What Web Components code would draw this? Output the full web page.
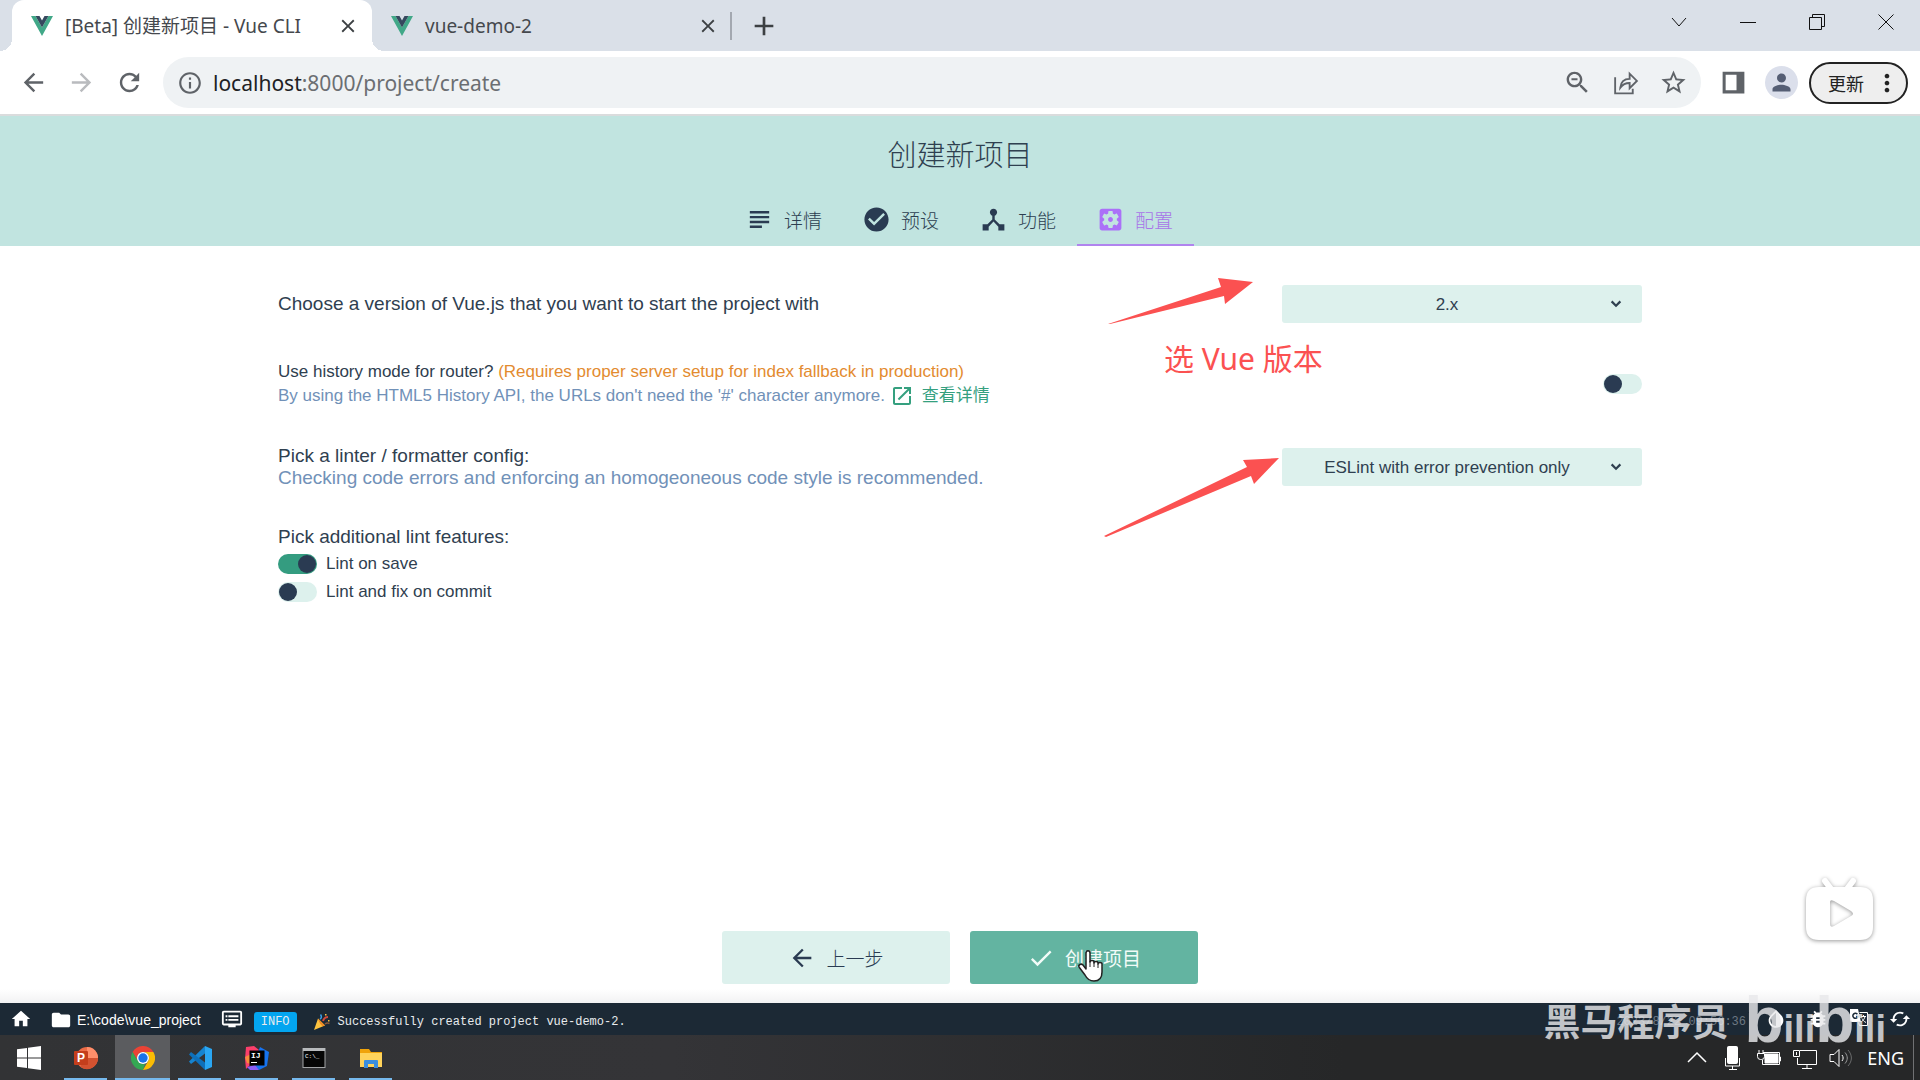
<!DOCTYPE html>
<html lang="zh-CN">
<head>
<meta charset="UTF-8">
<title>[Beta] 创建新项目 - Vue CLI</title>
<style>
    body {
        margin: 0;
        background: #fff;
        font-family: "Liberation Sans", "Noto Sans CJK SC", sans-serif;
        color: #2f4050;
    }
</style>
</head>
<body>
<app-desktop></app-desktop>

<script>
// Filled 24x24 icons, by name
const ICONS = {
    subject: 'M14 17H4v2h10v-2zm6-8H4v2h16V9zM4 15h16v-2H4v2zM4 5v2h16V5H4z',
    check_circle: 'M12 2C6.48 2 2 6.48 2 12s4.48 10 10 10 10-4.48 10-10S17.52 2 12 2zm-2 15l-5-5 1.41-1.41L10 14.17l7.59-7.59L19 8l-9 9z',
    device_hub: 'M17 16l-4-4V8.82C14.16 8.4 15 7.3 15 6c0-1.66-1.34-3-3-3S9 4.34 9 6c0 1.3.84 2.4 2 2.82V12l-4 4H3v5h5v-3.05l4-4.2 4 4.2V21h5v-5h-4z',
    settings_app: 'M12 10c-1.1 0-2 .9-2 2s.9 2 2 2 2-.9 2-2-.9-2-2-2zm7-7H5c-1.11 0-2 .9-2 2v14c0 1.1.89 2 2 2h14c1.11 0 2-.9 2-2V5c0-1.1-.89-2-2-2zm-1.75 9c0 .23-.02.46-.05.68l1.48 1.16c.13.11.17.3.08.45l-1.4 2.42c-.09.15-.27.21-.43.15l-1.74-.7c-.36.28-.76.51-1.18.69l-.26 1.85c-.03.17-.18.3-.35.3h-2.8c-.17 0-.32-.13-.35-.29l-.26-1.85c-.43-.18-.82-.41-1.18-.69l-1.74.7c-.16.06-.34 0-.43-.15l-1.4-2.42c-.09-.15-.05-.34.08-.45l1.48-1.16c-.03-.23-.05-.46-.05-.69s.02-.46.05-.68l-1.48-1.16c-.13-.11-.17-.3-.08-.45l1.4-2.42c.09-.15.27-.21.43-.15l1.74.7c.36-.28.76-.51 1.18-.69l.26-1.85c.03-.17.18-.3.35-.3h2.8c.17 0 .32.13.35.29l.26 1.85c.43.18.82.41 1.18.69l1.74-.7c.16-.06.34 0 .43.15l1.4 2.42c.09.15.05.34-.08.45l-1.48 1.16c.03.23.05.46.05.69z',
    arrow_back: 'M20 11H7.83l5.59-5.59L12 4l-8 8 8 8 1.41-1.41L7.83 13H20v-2z',
    arrow_forward: 'M12 4l-1.41 1.41L16.17 11H4v2h12.17l-5.58 5.59L12 20l8-8z',
    refresh: 'M17.65 6.35C16.2 4.9 14.21 4 12 4c-4.42 0-7.99 3.58-7.99 8s3.57 8 7.99 8c3.73 0 6.84-2.55 7.73-6h-2.08c-.82 2.33-3.04 4-5.65 4-3.31 0-6-2.69-6-6s2.69-6 6-6c1.66 0 3.14.69 4.22 1.78L13 11h7V4l-2.35 2.35z',
    info: 'M11 7h2v2h-2zm0 4h2v6h-2zm1-9C6.48 2 2 6.48 2 12s4.48 10 10 10 10-4.48 10-10S17.52 2 12 2zm0 18c-4.41 0-8-3.59-8-8s3.59-8 8-8 8 3.59 8 8-3.59 8-8 8z',
    zoom_out: 'M15.5 14h-.79l-.28-.27C15.41 12.59 16 11.11 16 9.5 16 5.91 13.09 3 9.5 3S3 5.91 3 9.5 5.91 16 9.5 16c1.61 0 3.09-.59 4.23-1.57l.27.28v.79l5 4.99L20.49 19l-4.99-5zm-6 0C7.01 14 5 11.99 5 9.5S7.01 5 9.5 5 14 7.01 14 9.5 11.99 14 9.5 14zM7 8.5h5v1.6H7z',
    star: 'M22 9.24l-7.19-.62L12 2 9.19 8.63 2 9.24l5.46 4.73L5.82 21 12 17.27 18.18 21l-1.63-7.03L22 9.24zM12 15.4l-3.76 2.27 1-4.28-3.32-2.88 4.38-.38L12 6.1l1.71 4.04 4.38.38-3.32 2.88 1 4.28L12 15.4z',
    person: 'M12 12c2.21 0 4-1.79 4-4s-1.79-4-4-4-4 1.79-4 4 1.79 4 4 4zm0 2c-2.67 0-8 1.34-8 4v2h16v-2c0-2.66-5.33-4-8-4z',
    more: 'M12 8c1.1 0 2-.9 2-2s-.9-2-2-2-2 .9-2 2 .9 2 2 2zm0 2c-1.1 0-2 .9-2 2s.9 2 2 2 2-.9 2-2-.9-2-2-2zm0 6c-1.1 0-2 .9-2 2s.9 2 2 2 2-.9 2-2-.9-2-2-2z',
    panel: 'M3 3h18v18H3zM5.5 5.5v13h9v-13z',
    close: 'M19 6.41L17.59 5 12 10.59 6.41 5 5 6.41 10.59 12 5 17.59 6.41 19 12 13.41 17.59 19 19 17.59 13.41 12z',
    add: 'M19 13h-6v6h-2v-6H5v-2h6V5h2v6h6v2z',
    expand: 'M16.3 7.9L12 12.2 7.7 7.9 5.8 9.8l6.2 6.2 6.2-6.2z',
    check: 'M9 16.17L4.83 12l-1.42 1.41L9 19 21 7l-1.41-1.41z',
    open_new: 'M19 19H5V5h7V3H5c-1.11 0-2 .9-2 2v14c0 1.1.89 2 2 2h14c1.1 0 2-.9 2-2v-7h-2v7zM14 3v2h3.59l-9.83 9.83 1.41 1.41L19 6.41V10h2V3h-7z',
    home: 'M10 20v-6h4v6h5v-8h3L12 3 2 12h3v8z',
    folder: 'M10 4H4c-1.1 0-1.99.9-1.99 2L2 18c0 1.1.9 2 2 2h16c1.1 0 2-.9 2-2V8c0-1.1-.9-2-2-2h-8l-2-2z',
    dvr: 'M21 3H3c-1.1 0-2 .9-2 2v12c0 1.1.9 2 2 2h5v2h8v-2h5c1.1 0 1.99-.9 1.99-2L23 5c0-1.1-.9-2-2-2zm0 14H3V5h18v12zm-2-9H8v2h11V8zm0 4H8v2h11v-2zM7 8H5v2h2V8zm0 4H5v2h2v-2z',
    invert: 'M17.66 7.93L12 2.27 6.34 7.93c-3.12 3.12-3.12 8.19 0 11.31C7.9 20.8 9.95 21.58 12 21.58s4.1-.78 5.66-2.34c3.12-3.12 3.12-8.19 0-11.31zM12 19.59c-1.6 0-3.11-.62-4.24-1.76C6.62 16.69 6 15.19 6 13.59s.62-3.11 1.76-4.24L12 5.1v14.49z',
    bug: 'M20 8h-2.81c-.45-.78-1.07-1.45-1.82-1.96L17 4.41 15.59 3l-2.17 2.17C12.96 5.06 12.49 5 12 5s-.96.06-1.41.17L8.41 3 7 4.41l1.62 1.63C7.88 6.55 7.26 7.22 6.81 8H4v2h2.09c-.05.33-.09.66-.09 1v1H4v2h2v1c0 .34.04.67.09 1H4v2h2.81c1.04 1.79 2.97 3 5.19 3s4.15-1.21 5.19-3H20v-2h-2.09c.05-.33.09-.66.09-1v-1h2v-2h-2v-1c0-.34-.04-.67-.09-1H20V8zm-6 8h-4v-2h4v2zm0-4h-4v-2h4v2z',
    cached: 'M19 8l-4 4h3c0 3.31-2.69 6-6 6-1.01 0-1.97-.25-2.8-.7l-1.46 1.46C8.97 19.54 10.43 20 12 20c4.42 0 8-3.58 8-8h3l-4-4zM6 12c0-3.31 2.69-6 6-6 1.01 0 1.97.25 2.8.7l1.46-1.46C15.03 4.46 13.57 4 12 4c-4.42 0-8 3.58-8 8H1l4 4 4-4H6z'
};

class MdIcon extends HTMLElement {
    connectedCallback() {
        this.attachShadow({ mode: 'open' });
        this.shadowRoot.innerHTML = `
            <style>
                :host { display: inline-flex; flex: none; width: 24px; height: 24px; }
                svg { width: 100%; height: 100%; fill: currentColor; }
            </style>
            <svg viewBox="0 0 24 24" aria-hidden="true"><path fill-rule="evenodd" d="${ICONS[this.getAttribute('name')]}"/></svg>
        `;
    }
}

class BrowserTab extends HTMLElement {
    connectedCallback() {
        this.attachShadow({ mode: 'open' });
        this.shadowRoot.innerHTML = `
            <style>
                :host {
                    display: flex;
                    align-items: center;
                    box-sizing: border-box;
                    position: relative;
                    width: 360px;
                    padding: 0 13px 0 19px;
                    gap: 12px;
                    font: 19px/28px "Noto Sans", "Noto Sans CJK SC", sans-serif;
                    color: #45484d;
                    border-radius: 12px 12px 0 0;
                }
                :host([active]) { background: #fff; }
                /* flared feet of the active tab */
                :host([active])::before, :host([active])::after {
                    content: "";
                    position: absolute;
                    bottom: 0;
                    width: 12px;
                    height: 12px;
                    background: radial-gradient(circle at 0 0, transparent 12px, #fff 12px);
                }
                :host([active])::before { left: -12px; }
                :host([active])::after { right: -12px; transform: scaleX(-1); }
                .logo { width: 22px; height: 20px; flex: none; }
                span { flex: 1; white-space: nowrap; }
                button { display: flex; padding: 0; border: 0; background: none; color: #3c4043; }
                md-icon { width: 22px; height: 22px; }
            </style>
            <svg class="logo" viewBox="0 0 22 20" aria-hidden="true">
                <path fill="#41a888" d="M0 0h4.500L11 11.500 17.500 0H22L11 20z"/>
                <path fill="#35495e" d="M4.500 0h4L11 4.500 13.500 0h4L11 11.500z"/>
            </svg>
            <span><slot></slot></span>
            <button aria-label="Close"><md-icon name="close"></md-icon></button>
        `;
    }
}

class BrowserChrome extends HTMLElement {
    connectedCallback() {
        this.attachShadow({ mode: 'open' });
        this.shadowRoot.innerHTML = `
            <style>
                :host { display: block; border-bottom: 2px solid #dadcdd; }
                button { padding: 0; border: 0; background: none; color: inherit; }
                .strip {
                    display: flex;
                    height: 51px;
                    padding-left: 12px;
                    background: #dae0e8;
                }
                .new {
                    display: flex;
                    align-items: center;
                    height: 28px;
                    margin: 12px auto 0 -2px;
                    padding-left: 16px;
                    border-left: 2px solid #a3a8b0;
                    color: #3c4043;
                }
                .new md-icon { width: 32px; height: 32px; }
                .window { display: flex; height: 43px; }
                .window button { width: 69px; }
                .window svg { width: 16px; height: 16px; fill: none; stroke: #111; vertical-align: middle; }
                .toolbar {
                    display: flex;
                    align-items: center;
                    height: 63px;
                    padding: 0 12px 0 9px;
                    color: #5f6368;
                }
                .tool {
                    display: flex;
                    justify-content: center;
                    align-items: center;
                    width: 48px;
                    height: 48px;
                }
                .tool md-icon, .tool svg { width: 29px; height: 29px; }
                .off { color: #b9bbbe; }
                .omnibox {
                    display: flex;
                    flex: 1;
                    align-items: center;
                    height: 51px;
                    margin: 0 8px 0 10px;
                    padding: 0 4px 0 14px;
                    gap: 10px;
                    border-radius: 26px;
                    background: #eff2f4;
                }
                .omnibox > md-icon { width: 26px; height: 26px; }
                .url {
                    flex: 1;
                    font: 21px/30px "Noto Sans", sans-serif;
                    color: #6b6e72;
                }
                .url b { font-weight: 400; color: #202124; }
                .actions { display: flex; }
                .avatar {
                    display: flex;
                    justify-content: center;
                    align-items: center;
                    width: 33px;
                    height: 33px;
                    border-radius: 50%;
                    background: #dbdfeb;
                    color: #555e74;
                }
                .avatar md-icon { width: 27px; height: 27px; }
                .update {
                    display: flex;
                    align-items: center;
                    box-sizing: border-box;
                    width: 99px;
                    height: 42px;
                    margin-left: 4px;
                    padding: 0 5px 0 17px;
                    justify-content: space-between;
                    border: 2px solid #222;
                    border-radius: 21px;
                    background: #eee;
                    font: 18px "Noto Sans CJK SC", sans-serif;
                    color: #222;
                }
                .update md-icon { width: 28px; height: 28px; }
            </style>
            <div class="strip">
                <browser-tab active>[Beta] 创建新项目 - Vue CLI</browser-tab>
                <browser-tab>vue-demo-2</browser-tab>
                <button class="new" aria-label="New tab"><md-icon name="add"></md-icon></button>
                <div class="window">
                    <button aria-label="Tabs"><svg viewBox="0 0 16 16"><path d="M1 4l7 8 7-8"/></svg></button>
                    <button aria-label="Minimize"><svg viewBox="0 0 16 16"><path d="M0 8.500h16"/></svg></button>
                    <button aria-label="Restore"><svg viewBox="0 0 16 16"><path d="M.5 3.500h12v12H.5zM3.500 3.500v-3h12v12h-3"/></svg></button>
                    <button aria-label="Close"><svg viewBox="0 0 16 16"><path d="M.5.500l15 15M15.500.500l-15 15"/></svg></button>
                </div>
            </div>
            <div class="toolbar">
                <button class="tool" aria-label="Back"><md-icon name="arrow_back"></md-icon></button>
                <button class="tool off" aria-label="Forward"><md-icon name="arrow_forward"></md-icon></button>
                <button class="tool" aria-label="Reload"><md-icon name="refresh"></md-icon></button>
                <div class="omnibox">
                    <md-icon name="info"></md-icon>
                    <div class="url"><b>localhost</b>:8000/project/create</div>
                    <div class="actions">
                        <button class="tool" aria-label="Zoom"><md-icon name="zoom_out"></md-icon></button>
                        <button class="tool" aria-label="Share">
                            <svg viewBox="0 0 28 28" fill="none" stroke="currentColor" stroke-width="1.800"><path d="M4 9v15.500h17V20M9 19c.5-6 4-8.500 9-8.500V5.500l7 7-7 7v-5c-4 0-6.500 1-9 4.500z"/></svg>
                        </button>
                        <button class="tool" aria-label="Bookmark"><md-icon name="star"></md-icon></button>
                    </div>
                </div>
                <button class="tool" aria-label="Side panel"><md-icon name="panel"></md-icon></button>
                <button class="tool" aria-label="Profile"><span class="avatar"><md-icon name="person"></md-icon></span></button>
                <button class="update">更新<md-icon name="more"></md-icon></button>
            </div>
        `;
    }
}

class StepTab extends HTMLElement {
    connectedCallback() {
        this.attachShadow({ mode: 'open' });
        this.shadowRoot.innerHTML = `
            <style>
                :host { display: block; }
                a {
                    display: flex;
                    align-items: center;
                    box-sizing: border-box;
                    height: 50px;
                    padding: 0 21px 2px 19px;
                    gap: 10px;
                    border-bottom: 2px solid transparent;
                    font-size: 19px;
                    font-weight: 300;
                    color: #2c3e50;
                    text-decoration: none;
                }
                md-icon { width: 29px; height: 29px; color: #2a3b52; }
                :host([active]) a { border-bottom-color: #b084ee; color: #a874e8; }
                :host([active]) md-icon { color: #ab70f8; }
            </style>
            <a href="#"><md-icon name="${this.getAttribute('icon')}"></md-icon><slot></slot></a>
        `;
    }
}

class ProjectHeader extends HTMLElement {
    connectedCallback() {
        this.attachShadow({ mode: 'open' });
        this.shadowRoot.innerHTML = `
            <style>
                :host { display: block; background: #c1e4e0; }
                h1 {
                    margin: 0;
                    font-size: 29px;
                    line-height: 80px;
                    font-weight: 300;
                    text-align: center;
                }
                nav { display: flex; justify-content: center; }
            </style>
            <h1>创建新项目</h1>
            <nav>
                <step-tab icon="subject">详情</step-tab>
                <step-tab icon="check_circle">预设</step-tab>
                <step-tab icon="device_hub">功能</step-tab>
                <step-tab icon="settings_app" active>配置</step-tab>
            </nav>
        `;
    }
}

class SettingRow extends HTMLElement {
    connectedCallback() {
        this.attachShadow({ mode: 'open' });
        this.shadowRoot.innerHTML = `
            <style>
                :host { display: flex; justify-content: space-between; align-items: center; }
                .control { display: flex; }
            </style>
            <div><slot></slot></div>
            <div class="control"><slot name="control"></slot></div>
        `;
    }
}

class ProjectConfig extends HTMLElement {
    connectedCallback() {
        this.attachShadow({ mode: 'open' });
        this.shadowRoot.innerHTML = `
            <style>
                :host {
                    display: flex;
                    flex-direction: column;
                    box-sizing: border-box;
                    width: 100%;
                    max-width: 1364px;
                    margin: 0 auto;
                    padding-top: 39px;
                    gap: 37px;
                }
                .title, .note { font-size: 19px; line-height: 22px; }
                .note { color: #7191b8; }
                .small { font-size: 17px; line-height: 24px; }
                .warn { color: #e38b2f; }
                .link {
                    display: inline-flex;
                    align-items: center;
                    gap: 8px;
                    color: #35a07f;
                    text-decoration: none;
                    vertical-align: top;
                }
                .picker { display: grid; width: 360px; align-items: center; }
                .picker > * { grid-area: 1 / 1; }
                .picker md-icon { justify-self: end; width: 20px; height: 20px; margin-right: 16px; pointer-events: none; }
                select {
                    appearance: none;
                    width: 100%;
                    height: 38px;
                    padding: 0 30px 0 0;
                    border: 0;
                    border-radius: 3px;
                    background: #ddf1ed;
                    color: #2f4050;
                    font: 17px "Liberation Sans", sans-serif;
                    text-align: center;
                    text-align-last: center;
                }
                .features { display: grid; gap: 4px; }
                .features .title { line-height: 22px; }
                .option { display: flex; align-items: center; gap: 9px; font-size: 17px; line-height: 24px; }
                input {
                    appearance: none;
                    display: flex;
                    box-sizing: border-box;
                    width: 39px;
                    height: 20px;
                    margin: 0;
                    padding: 1px;
                    border-radius: 10px;
                    background: #ddf1ed;
                }
                input::before {
                    content: "";
                    width: 18px;
                    height: 18px;
                    border-radius: 50%;
                    background: #2a3b52;
                }
                input:checked { background: #349c80; justify-content: flex-end; }
            </style>
            <setting-row>
                <label class="title" for="version">Choose a version of Vue.js that you want to start the project with</label>
                <div class="picker" slot="control">
                    <select id="version"><option>2.x</option></select>
                    <md-icon name="expand"></md-icon>
                </div>
            </setting-row>
            <setting-row>
                <div class="small"><label for="history">Use history mode for router? <span class="warn">(Requires proper server setup for index fallback in production)</span></label></div>
                <div class="note small">By using the HTML5 History API, the URLs don't need the '#' character anymore.
                    <a class="link" href="#"><md-icon name="open_new"></md-icon>查看详情</a></div>
                <input slot="control" id="history" type="checkbox">
            </setting-row>
            <setting-row>
                <div class="title"><label for="linter">Pick a linter / formatter config:</label></div>
                <div class="note">Checking code errors and enforcing an homogeoneous code style is recommended.</div>
                <div class="picker" slot="control">
                    <select id="linter"><option>ESLint with error prevention only</option></select>
                    <md-icon name="expand"></md-icon>
                </div>
            </setting-row>
            <div class="features">
                <div class="title">Pick additional lint features:</div>
                <label class="option"><input type="checkbox" checked>Lint on save</label>
                <label class="option"><input type="checkbox">Lint and fix on commit</label>
            </div>
        `;
    }
}

class ActionBar extends HTMLElement {
    connectedCallback() {
        this.attachShadow({ mode: 'open' });
        this.shadowRoot.innerHTML = `
            <style>
                :host {
                    display: flex;
                    justify-content: center;
                    gap: 20px;
                    padding: 16px 0 19px;
                    background: linear-gradient(to top, #f2f2f3, #fff 14px);
                }
                button {
                    display: flex;
                    justify-content: center;
                    align-items: center;
                    gap: 10px;
                    width: 228px;
                    height: 53px;
                    border: 0;
                    border-radius: 3px;
                    background: #ddf1ed;
                    color: #2a3b52;
                    font: 300 19px "Noto Sans CJK SC", sans-serif;
                }
                md-icon { width: 28px; height: 28px; }
                .primary { background: #63b4a1; color: #f2fbf8; font-weight: 400; }
            </style>
            <button><md-icon name="arrow_back"></md-icon>上一步</button>
            <button class="primary"><md-icon name="check"></md-icon>创建项目</button>
        `;
    }
}

class StatusBar extends HTMLElement {
    connectedCallback() {
        this.attachShadow({ mode: 'open' });
        this.shadowRoot.innerHTML = `
            <style>
                :host {
                    display: flex;
                    align-items: center;
                    height: 32px;
                    padding: 0 9px 0 10px;
                    background: #1c2935;
                    color: #fff;
                    font-size: 14px;
                }
                md-icon { width: 22px; height: 22px; }
                .path { display: flex; align-items: center; gap: 5px; margin: 0 20px 0 18px; padding-top: 1px; }
                .log {
                    display: flex;
                    align-items: center;
                    flex: 1;
                    gap: 16px;
                    margin-left: 11px;
                    padding-top: 6px;
                    font: 12px/20px "Liberation Mono", monospace;
                    color: #e8ebee;
                }
                .level { padding: 0 7px; border-radius: 3px; background: #03a5f0; }
                .log svg { width: 18px; height: 18px; margin-right: -9px; }
                .date { padding-top: 6px; font: 12px "Liberation Mono", monospace; color: #6d7883; margin-right: 19px; }
                .tools { display: flex; gap: 20px; }
            </style>
            <md-icon name="home"></md-icon>
            <span class="path"><md-icon name="folder"></md-icon>E:\\code\\vue_project</span>
            <md-icon name="dvr"></md-icon>
            <div class="log">
                <span class="level">INFO</span>
                <svg viewBox="0 0 18 18" aria-hidden="true">
                    <path fill="#fdc33f" d="M1 17L5 5.500l7 7z"/>
                    <path fill="#f08a24" d="M5 5.500l7 7-2.500.8C8 12 6 9.500 5 5.500z"/>
                    <path fill="none" stroke="#3b9fe8" stroke-width="1.500" d="M7 6c2-1 1.500-3 .5-4.500"/>
                    <path fill="none" stroke="#d34a3c" stroke-width="2" d="M10 8c1-3 3-4 5-4"/>
                    <path fill="none" stroke="#8a5a3c" stroke-width="1.500" d="M12 11c2-1.500 3.500-1 4.500-.5"/>
                    <path fill="#fdc33f" d="M12 1h1.500v1.500H12zM15 7h1.500v1.500H15z"/>
                </svg>
                <span>Successfully created project vue-demo-2.</span>
            </div>
            <span class="date">2023/8/22 09:56:36</span>
            <div class="tools">
                <md-icon name="invert"></md-icon>
                <md-icon name="bug"></md-icon>
                <svg width="20" height="20" viewBox="0 0 20 20" fill="none" stroke="#fff" aria-hidden="true">
                    <path fill="#fff" stroke="none" d="M1 1h8l3 13H3a2 2 0 0 1-2-2z"/>
                    <path stroke="#1c2935" stroke-width="1.500" d="M8.500 6.500a2.500 2.500 0 1 0 .3 2H7"/>
                    <path d="M10.500 4.500h8v13h-8l-1-3M12 8.500h5M14.500 7v1.500M16 8.500c-.5 2.500-2 4-3.500 5M13 10.500c.8 1.500 2 3 4 4"/>
                </svg>
                <md-icon name="cached"></md-icon>
            </div>
        `;
    }
}

class TaskButton extends HTMLElement {
    connectedCallback() {
        this.attachShadow({ mode: 'open' });
        this.shadowRoot.innerHTML = `
            <style>
                :host { display: block; }
                button {
                    display: grid;
                    place-items: center;
                    box-sizing: border-box;
                    width: 55px;
                    height: 45px;
                    padding: 0;
                    border: 0;
                    background: linear-gradient(#76b9ed, #76b9ed) bottom / 43px 2px no-repeat;
                }
                :host([plain]) button { background: none; }
                :host([active]) button { background-size: 55px 2px; background-color: #5b5c5f; }
                ::slotted(svg) { width: 24px; height: 24px; }
            </style>
            <button aria-label="${this.getAttribute('label')}"><slot></slot></button>
        `;
    }
}

class TaskBar extends HTMLElement {
    connectedCallback() {
        this.attachShadow({ mode: 'open' });
        this.shadowRoot.innerHTML = `
            <style>
                :host {
                    display: flex;
                    align-items: center;
                    height: 45px;
                    background: linear-gradient(to right, #323335, #343437 35%, #262728 70%);
                }
                .apps { display: flex; flex: 1; gap: 2px; padding-left: 1px; }
                .tray { display: flex; align-items: center; color: #fff; font: 18px "Noto Sans", sans-serif; }
                .tray svg { width: 24px; height: 24px; margin: 0 6px; fill: none; stroke: #fff; }
                .lang { margin: 0 9px 0 8px; }
                .peek { width: 1px; height: 45px; margin-right: 6px; background: #707173; }
            </style>
            <div class="apps">
                <task-button label="Start" plain>
                    <svg viewBox="0 0 24 24" fill="#fff"><path d="M0 3.300l10-1.400v9.600H0zM11 1.700L24 0v11.500H11zM0 12.500h10v9.600L0 20.700zM11 12.500h13V24l-13-1.700z"/></svg>
                </task-button>
                <task-button label="PowerPoint">
                    <svg viewBox="0 0 24 24"><circle cx="13" cy="12" r="11" fill="#ed6c47"/><path fill="#ff8f6b" d="M13 1a11 11 0 0 1 11 11H13z"/><path fill="#d35230" d="M13 12h11a11 11 0 0 1-18 8.500z"/><rect y="5" width="14" height="14" rx="1" fill="#c43e1c"/><text x="7" y="16" text-anchor="middle" font-family="Liberation Sans" font-weight="700" font-size="12" fill="#fff">P</text></svg>
                </task-button>
                <task-button label="Chrome" active>
                    <svg viewBox="0 0 24 24"><path fill="#ea4335" d="M1.600 6A12 12 0 0 1 22.400 6H12a6 6 0 0 0-5.200 9z"/><path fill="#34a853" d="M1.600 6l5.200 9A6 6 0 0 0 14 17.700L12 24A12 12 0 0 1 1.600 6z"/><path fill="#fbbc04" d="M22.400 6A12 12 0 0 1 12 24l5.200-9A6 6 0 0 0 12 6z"/><circle cx="12" cy="12" r="6" fill="#fff"/><circle cx="12" cy="12" r="4.700" fill="#1a73e8"/></svg>
                </task-button>
                <task-button label="Visual Studio Code">
                    <svg viewBox="0 0 24 24"><path fill="#1684d0" d="M17 0L1 15.500l2 2.500L19 6z"/><path fill="#0e70ba" d="M1 8.500L3 6l16 12-2 6z"/><path fill="#2aa6f2" d="M17 0l7 3v18l-7 3z"/></svg>
                </task-button>
                <task-button label="IntelliJ IDEA">
                    <svg viewBox="0 0 24 24"><path fill="#fc3f6b" d="M1 1l8-1 5 4-8 14-5 5-1-10z"/><path fill="#f98b3c" d="M0 11l6-3v10l-4-1z"/><path fill="#1673f0" d="M15 1l9 5-2 14-8 4-6-5z"/><path fill="#8b5df6" d="M10 19l4 5H5l-3-3z"/><rect x="4.500" y="4.500" width="15" height="15" fill="#000"/><text x="6" y="12" font-family="Liberation Mono" font-weight="700" font-size="8" fill="#fff">IJ</text><path fill="#fff" d="M6 16h6v1H6z"/></svg>
                </task-button>
                <task-button label="Terminal">
                    <svg viewBox="0 0 24 24"><rect x="1" y="2.500" width="22" height="19" fill="#060606" stroke="#a3a5a7"/><path fill="#b8babc" d="M1 2h22v3H1z"/><text x="3" y="12" font-family="Liberation Mono" font-size="6" fill="#fff">C:\\_</text></svg>
                </task-button>
                <task-button label="File Explorer">
                    <svg viewBox="0 0 24 24"><path fill="#f0a30a" d="M1 3h9l2 3h11v5H1z"/><path fill="#ffd35b" d="M1 7h22v14H1z"/><path fill="#3b8ede" d="M6 14h12a1 1 0 0 1 1 1v7h-4v-4H9v4H5v-7a1 1 0 0 1 1-1z"/></svg>
                </task-button>
            </div>
            <div class="tray">
                <svg viewBox="0 0 24 24"><path stroke-width="1.500" d="M3 16l9-9 9 9"/></svg>
                <svg viewBox="0 0 24 24"><rect x="6.500" y=".5" width="10" height="17" rx="1" fill="#fff"/><path d="M4.500 12v8h14v-8M11.500 20v3M8 23.500h8"/></svg>
                <svg viewBox="0 0 24 24"><path fill="#fff" d="M8 8h13v9H8z"/><path d="M5.500 14v4.500h17V17M22.500 11h1v4h-1M6 6.500h16.500V17M2 4v4M6 4v4M.5 7.500h7v3a3 3 0 0 1-3 3h-1a3 3 0 0 1-3-3z"/></svg>
                <svg viewBox="0 0 24 24"><path d="M7 4.500h16.500v14H4.500V12M14 18.500v4M9 22.500h10M.5 4.500h6v6h-6zM3.500 6v3"/></svg>
                <svg viewBox="0 0 24 24"><path d="M1 8.500h4l5-5v17l-5-5H1zM13 9c1.500 2 1.500 4 0 6"/><path stroke="#9a9b9c" d="M16 6.500c3 3.500 3 7.500 0 11"/><path stroke="#6a6b6c" d="M19 4c4.500 5 4.500 11 0 16"/></svg>
                <span class="lang">ENG</span>
                <span class="peek"></span>
            </div>
        `;
    }
}

// Drawn over the whole desktop: arrows, caption, pointer, player button, channel mark
class ScreenNotes extends HTMLElement {
    connectedCallback() {
        this.attachShadow({ mode: 'open' });
        this.shadowRoot.innerHTML = `
            <style>
                :host { position: absolute; inset: 0; overflow: hidden; pointer-events: none; }
                svg, p { position: absolute; margin: 0; }
                .arrow { fill: #fb5151; }
                .first { left: 1108px; top: 278px; }
                .second { left: 1104px; top: 458px; }
                .caption {
                    left: 1164px;
                    top: 339px;
                    font: 30px/40px "Noto Sans", "Noto Sans CJK SC", sans-serif;
                    color: #fb5151;
                }
                .hand { left: 1077px; top: 949px; }
                .player { right: 37px; bottom: 132px; filter: drop-shadow(0 1px 2px rgba(0, 0, 0, .4)); }
                .mark {
                    right: 34px;
                    bottom: 30px;
                    display: flex;
                    align-items: flex-end;
                    gap: 16px;
                    color: rgba(232, 232, 234, .82);
                }
                .name { font: 700 37px/60px "Noto Sans CJK SC", sans-serif; }
                .brand { font: 700 38px/42px "Liberation Sans", sans-serif; }
                .brand b { font-size: 64px; }
            </style>
            <svg class="arrow first" width="146" height="46"><path d="M0 46L113 9l-3-9 35 4-28 22-1-8L2 46z"/></svg>
            <p class="caption">选 Vue 版本</p>
            <svg class="arrow second" width="176" height="80"><path d="M0 78L143 9l-4-7 36-2-25 26-3-8L2 79z"/></svg>
            <svg class="hand" width="28" height="34" viewBox="0 0 28 34"><path fill="#fff" stroke="#222" stroke-width="1.500" stroke-linejoin="round" d="M9 20V4c0-3 4-3 4 0v9c0-2 4-2 4 0v1c0-2 4-2 4 0v1c0-2 4-2 4 0v8c0 6-3 9-8 9-5 0-7-2-9-6l-6-8c-1-2 2-4 4-2z"/><path stroke="#222" d="M13 12v6M17 13v5M21 15v4"/></svg>
            <svg class="player" width="80" height="76" viewBox="0 0 80 76">
                <path stroke="#fff" stroke-width="6" stroke-linecap="round" d="M22 9l6 8M50 9l-6 8"/>
                <path fill="#fff" fill-rule="evenodd" d="M16 15h41q13 0 13 13v27q0 13-13 13H16Q3 68 3 55V28q0-13 13-13zM27 30v22q0 4 4 2l17-10q4-2 0-5L31 29q-4-2-4 1z"/>
            </svg>
            <p class="mark"><span class="name">黑马程序员</span><span class="brand"><b>b</b>ili<b>b</b>ili</span></p>
        `;
    }
}

class AppDesktop extends HTMLElement {
    connectedCallback() {
        this.attachShadow({ mode: 'open' });
        this.shadowRoot.innerHTML = `
            <style>
                :host {
                    display: flex;
                    flex-direction: column;
                    position: relative;
                    min-height: 100vh;
                }
                main { flex: 1; }
            </style>
            <browser-chrome></browser-chrome>
            <project-header></project-header>
            <main><project-config></project-config></main>
            <action-bar></action-bar>
            <status-bar></status-bar>
            <task-bar></task-bar>
            <screen-notes></screen-notes>
        `;
    }
}

customElements.define('md-icon', MdIcon);
customElements.define('browser-tab', BrowserTab);
customElements.define('browser-chrome', BrowserChrome);
customElements.define('step-tab', StepTab);
customElements.define('project-header', ProjectHeader);
customElements.define('setting-row', SettingRow);
customElements.define('project-config', ProjectConfig);
customElements.define('action-bar', ActionBar);
customElements.define('status-bar', StatusBar);
customElements.define('task-button', TaskButton);
customElements.define('task-bar', TaskBar);
customElements.define('screen-notes', ScreenNotes);
customElements.define('app-desktop', AppDesktop);
</script>
</body>
</html>
